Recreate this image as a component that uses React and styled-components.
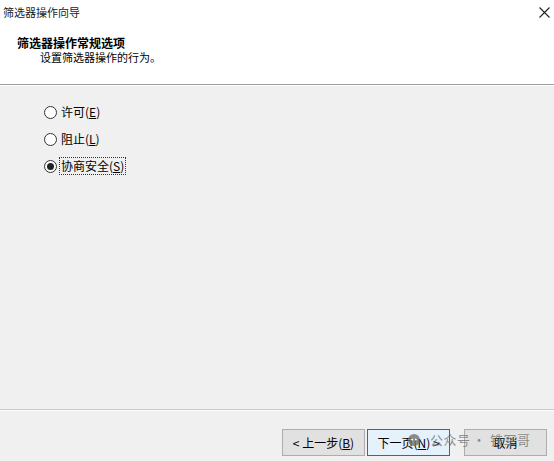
import React from 'react';
import styled, { createGlobalStyle } from 'styled-components';

const GlobalStyle = createGlobalStyle`
  html, body {
    margin: 0;
    padding: 0;
    background: #f0f0f0;
  }
  * {
    box-sizing: border-box;
  }
`;

const Window = styled.div`
  position: relative;
  display: flex;
  flex-direction: column;
  width: 554px;
  height: 461px;
  overflow: hidden;
  background: #f0f0f0;
  font-family: "Noto Sans CJK SC", "Liberation Sans", sans-serif;
  color: #000;
`;

const Header = styled.div`
  position: relative;
  height: 85px;
  padding: 4px 0 0 3px;
  background: #fff;
  border-bottom: 1px solid #a0a0a0;
  box-shadow: 0 1px 0 #ffffff;
`;

const Title = styled.div`
  font-size: 11px;
  line-height: 16px;
  color: #1a1a1a;
`;

const Close = styled.div`
  position: absolute;
  top: 5px;
  right: 3px;
  width: 14px;
  height: 14px;
  display: flex;
  align-items: center;
  justify-content: center;
`;

const Heading = styled.div`
  margin: 17px 0 0 14px;
  font-size: 12px;
  font-weight: bold;
  line-height: 12px;
`;

const Description = styled.div`
  margin: 2px 0 0 37px;
  font-size: 11px;
  line-height: 12px;
`;

const Body = styled.div`
  flex: 1;
  padding: 18px 0 0 44px;
  display: flex;
  flex-direction: column;
  gap: 9px;
  border-bottom: 1px solid #c8c8c8;
  box-shadow: 0 1px 0 #ffffff;
`;

const Option = styled.label`
  display: flex;
  align-items: center;
  height: 18px;
  font-size: 12px;
  line-height: 14px;
`;

const Radio = styled.span`
  position: relative;
  width: 13px;
  height: 13px;
  border: 1px solid #333;
  border-radius: 50%;
  background: #fff;
  flex-shrink: 0;

  &::after {
    content: '';
    display: ${p => (p.$checked ? 'block' : 'none')};
    position: absolute;
    left: 2px;
    top: 2px;
    width: 7px;
    height: 7px;
    border-radius: 50%;
    background: #222;
  }
`;

const Label = styled.span`
  margin-left: 2px;
  padding: 1px 1px;
  border: 1px dotted ${p => (p.$focused ? '#333' : 'transparent')};
  white-space: nowrap;
`;

const Footer = styled.div`
  height: 51px;
  padding: 19px 7px 0 0;
  display: flex;
  justify-content: flex-end;
  align-items: flex-start;
`;

const Button = styled.button`
  width: 83px;
  height: 27px;
  margin-left: ${p => p.$gap || 0}px;
  padding: 0;
  font-family: inherit;
  font-size: 12px;
  color: #000;
  background: ${p => (p.$primary ? '#e5f1fb' : '#e1e1e1')};
  border: 1px solid ${p => (p.$primary ? '#0078d7' : '#adadad')};
  border-radius: 0;
`;

const Watermark = styled.div`
  position: absolute;
  left: 408px;
  top: 431px;
  display: flex;
  align-items: center;
  gap: 10px;
  height: 18px;
  font-size: 13px;
  line-height: 18px;
  letter-spacing: 0.5px;
  color: rgba(115, 115, 115, 0.8);
  pointer-events: none;
  white-space: nowrap;
`;

const Dot = styled.span`
  margin: 0 4px 0 2px;
`;

const Mnemonic = ({ children }) => <u>{children}</u>;

const options = [
  { label: '许可', key: 'E' },
  { label: '阻止', key: 'L' },
  { label: '协商安全', key: 'S', checked: true },
];

export default function App() {
  return (
    <>
      <GlobalStyle />
      <Window>
        <Header>
          <Title>筛选器操作向导</Title>
          <Close>
            <svg width="11" height="11" viewBox="0 0 11 11">
              <path d="M0.5 0.5 L10.5 10.5 M10.5 0.5 L0.5 10.5" stroke="#222" strokeWidth="1.1" />
            </svg>
          </Close>
          <Heading>筛选器操作常规选项</Heading>
          <Description>设置筛选器操作的行为。</Description>
        </Header>
        <Body>
          {options.map(o => (
            <Option key={o.key}>
              <Radio $checked={o.checked} />
              <Label $focused={o.checked}>
                {o.label}(<Mnemonic>{o.key}</Mnemonic>)
              </Label>
            </Option>
          ))}
        </Body>
        <Footer>
          <Button>&lt; 上一步(<Mnemonic>B</Mnemonic>)</Button>
          <Button $primary $gap={2}>下一页(<Mnemonic>N</Mnemonic>) &gt;</Button>
          <Button $gap={14}>取消</Button>
        </Footer>
        <Watermark>
          <svg width="12" height="12" viewBox="0 0 12 12">
            <circle cx="6" cy="6" r="6" fill="rgba(105,105,105,0.75)" />
            <circle cx="4.1" cy="5.5" r="1" fill="#fff" />
            <circle cx="7.9" cy="5.5" r="1" fill="#fff" />
          </svg>
          <span>公众号<Dot>·</Dot>铁军哥</span>
        </Watermark>
      </Window>
    </>
  );
}
